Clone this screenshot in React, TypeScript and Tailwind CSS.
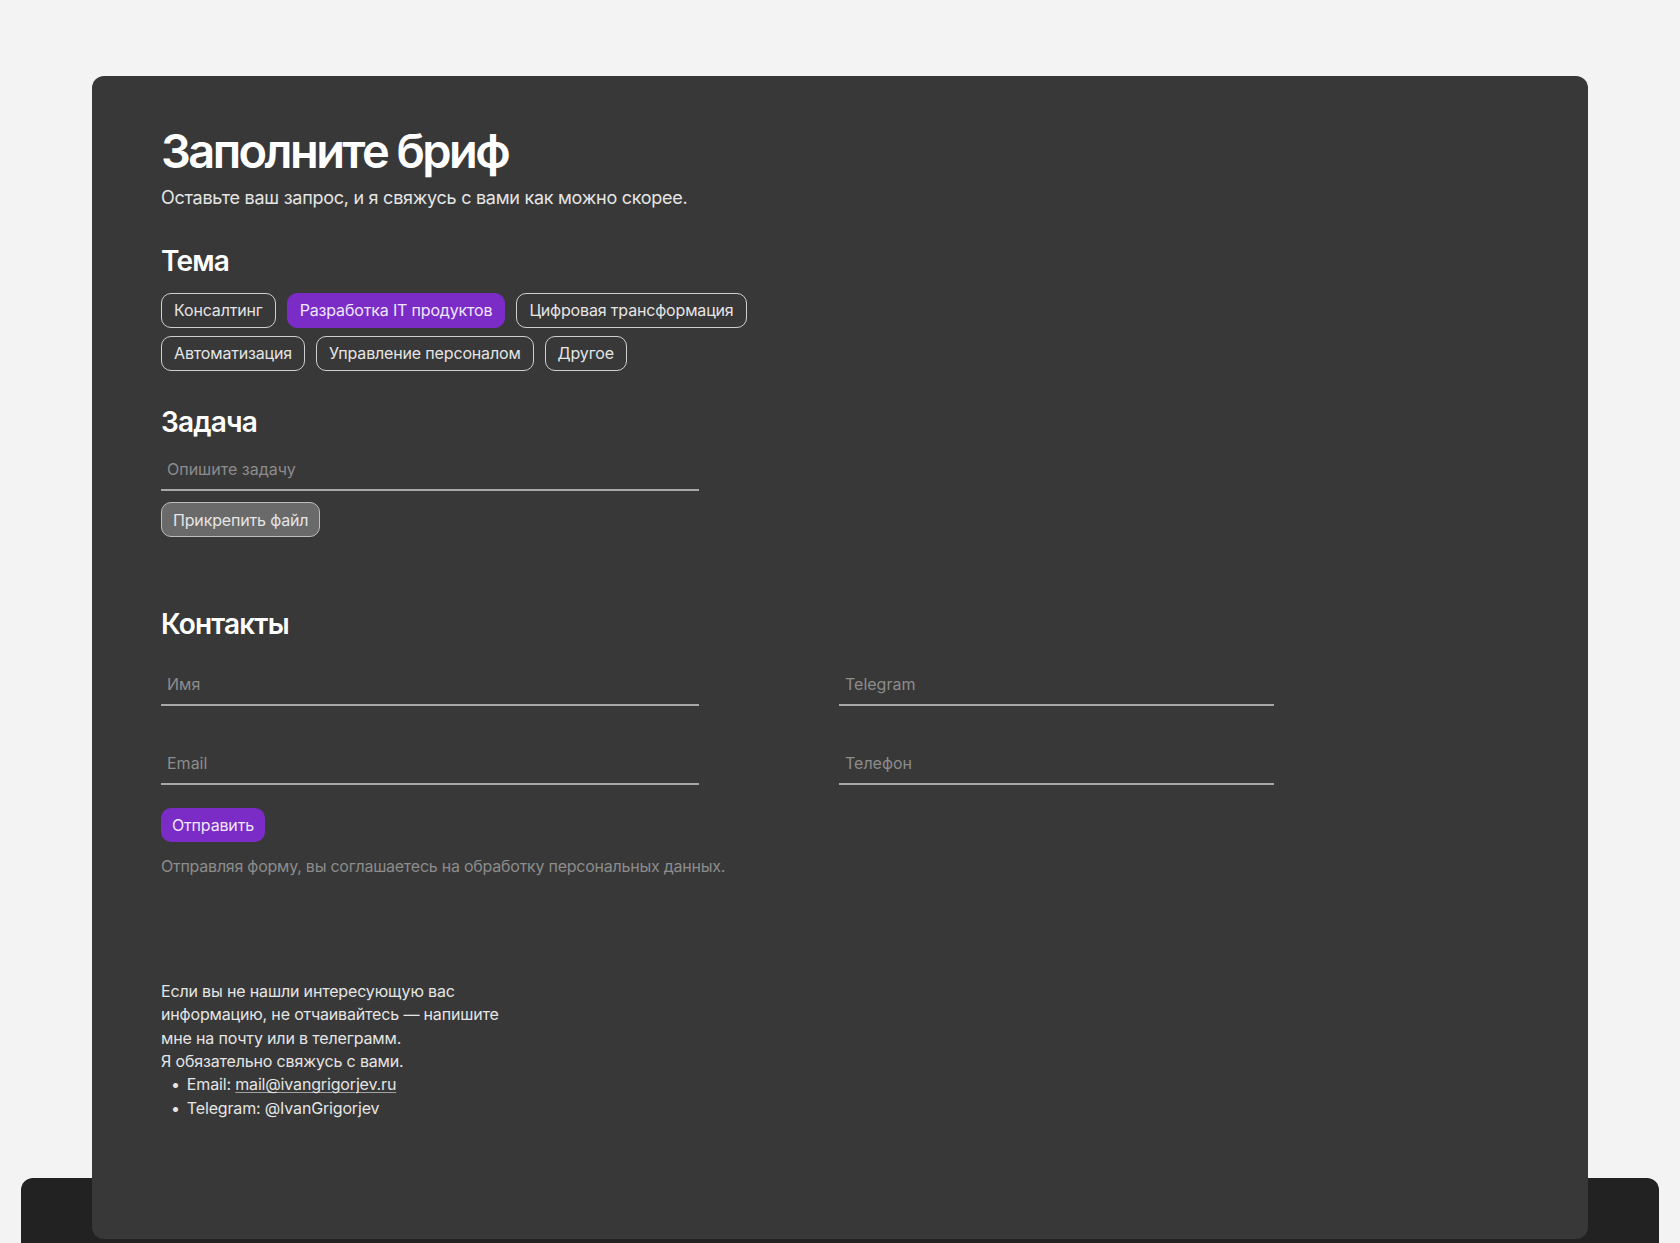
import { useState } from "react";

const topics = [
  "Консалтинг",
  "Разработка IT продуктов",
  "Цифровая трансформация",
  "Автоматизация",
  "Управление персоналом",
  "Другое",
];

function Field({ placeholder }: { placeholder: string }) {
  return (
    <input
      type="text"
      placeholder={placeholder}
      className="w-full h-[42px] px-[6px] bg-transparent border-b-2 border-[#a8a8a8] text-[16px] text-neutral-200 placeholder:text-[#8c8c8c] outline-none"
    />
  );
}

export default function App() {
  const [topic, setTopic] = useState("Разработка IT продуктов");

  return (
    <div className="min-h-screen bg-[#f3f3f3] pt-[76px] font-['Inter',sans-serif] overflow-hidden">
      <div className="relative z-10 mx-[92px] -mb-[61px] rounded-[12px] bg-[#383838] pl-[69px] pt-[47px] pb-[119px]">
        <h1 className="text-[47px] leading-[56px] font-semibold tracking-[-0.055em] text-white">
          Заполните бриф
        </h1>
        <p className="mt-[6px] text-[18px] leading-[26px] tracking-[-0.015em] text-neutral-200">
          Оставьте ваш запрос, и я свяжусь с вами как можно скорее.
        </p>

        <h2 className="mt-[34px] text-[28px] leading-[1.2] font-semibold tracking-[-0.03em] text-white">
          Тема
        </h2>
        <div className="mt-[14px] flex flex-wrap gap-x-[11px] gap-y-[8px] w-[600px]">
          {topics.map((t) => (
            <button
              key={t}
              type="button"
              onClick={() => setTopic(t)}
              className={
                topic === t
                  ? "h-[35px] px-[12px] rounded-[10px] border-[1.5px] border-[#7b2cc6] bg-[#7b2cc6] text-[16px] tracking-[-0.01em] text-[#f0e6ff]"
                  : "h-[35px] px-[12px] rounded-[10px] border-[1.5px] border-[#cfcfcf] text-[16px] tracking-[-0.01em] text-neutral-200"
              }
            >
              {t}
            </button>
          ))}
        </div>

        <h2 className="mt-[35px] text-[28px] leading-[1.2] font-semibold tracking-[-0.03em] text-white">
          Задача
        </h2>
        <div className="mt-[10px] w-[538px]">
          <Field placeholder="Опишите задачу" />
        </div>
        <button
          type="button"
          className="mt-[11px] h-[35px] px-[11px] rounded-[10px] border-[1.5px] border-[#bdbdbd] bg-[#6a6a6a] text-[16px] tracking-[-0.01em] text-neutral-200"
        >
          Прикрепить файл
        </button>

        <h2 className="mt-[71px] text-[28px] leading-[1.2] font-semibold tracking-[-0.03em] text-white">
          Контакты
        </h2>
        <div className="mt-[22px] flex gap-[140px]">
          <div className="w-[538px] flex flex-col gap-[37px]">
            <Field placeholder="Имя" />
            <Field placeholder="Email" />
          </div>
          <div className="w-[435px] flex flex-col gap-[37px]">
            <Field placeholder="Telegram" />
            <Field placeholder="Телефон" />
          </div>
        </div>
        <button
          type="button"
          className="mt-[23px] h-[34px] px-[11px] rounded-[10px] bg-[#7b2cc6] text-[16px] tracking-[-0.01em] text-[#f0e6ff]"
        >
          Отправить
        </button>
        <p className="mt-[12px] text-[16px] leading-[24px] tracking-[-0.015em] text-[#8c8c8c]">
          Отправляя форму, вы соглашаетесь на обработку персональных данных.
        </p>

        <div className="mt-[102px] text-[16px] leading-[23.4px] tracking-[-0.01em] text-neutral-200">
          <p>
            Если вы не нашли интересующую вас
            <br />
            информацию, не отчаивайтесь — напишите
            <br />
            мне на почту или в телеграмм.
            <br />
            Я обязательно свяжусь с вами.
          </p>
          <ul>
            <li className="flex gap-[7px] pl-[10px]">
              <span>•</span>
              <span>
                Email:{" "}
                <a href="#" className="underline underline-offset-2 decoration-1 decoration-neutral-400">
                  mail@ivangrigorjev.ru
                </a>
              </span>
            </li>
            <li className="flex gap-[7px] pl-[10px]">
              <span>•</span>
              <span>Telegram: @IvanGrigorjev</span>
            </li>
          </ul>
        </div>
      </div>
      <footer className="mx-[21px] h-[200px] rounded-t-[12px] bg-[#222222]" />
    </div>
  );
}
